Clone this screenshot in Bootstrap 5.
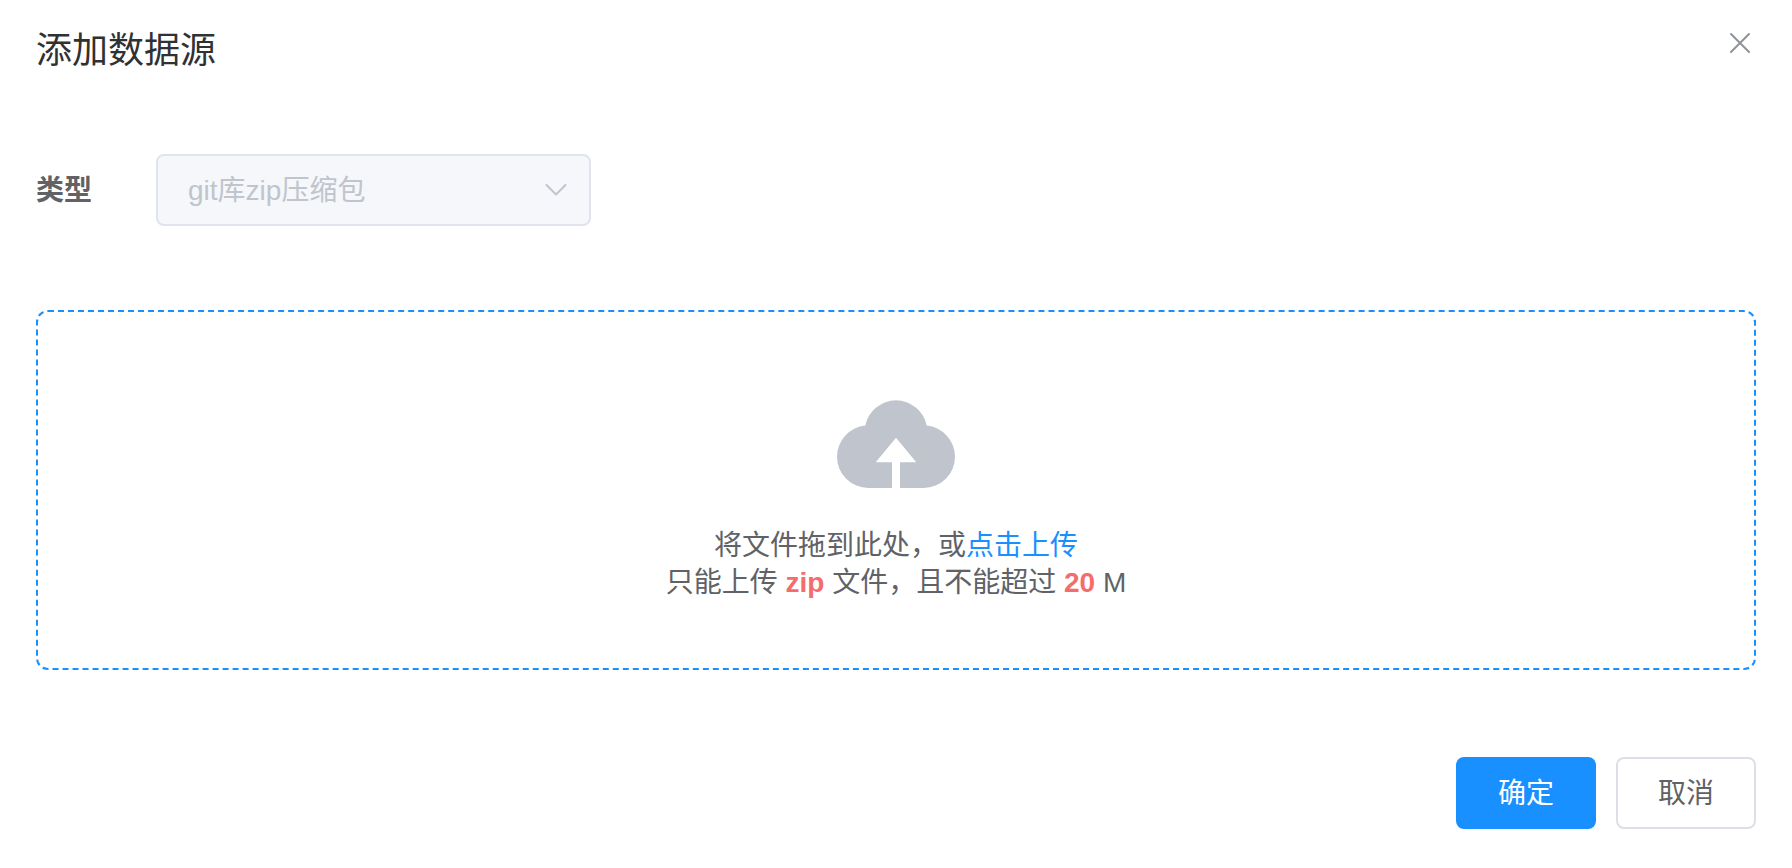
<!DOCTYPE html>
<html lang="zh-CN">
<head>
<meta charset="utf-8">
<meta name="viewport" content="width=device-width, initial-scale=1">
<title>添加数据源</title>
<link href="https://cdn.jsdelivr.net/npm/bootstrap@5.3.0/dist/css/bootstrap.min.css" rel="stylesheet">
<style>
  body {
    font-family: "Liberation Sans", "Noto Sans CJK SC", sans-serif;
    font-size: 28px;
    line-height: 37px;
    color: #606266;
    background: #fff;
  }
  .dialog-body { padding: 24px 36px; }
  .dialog-title { font-size: 36px; line-height: 54px; color: #303133; }
  .dialog-close { padding: 8px 5px; line-height: 0; color: #909399; border: 0; }
  .type-row { margin-top: 76px; gap: 64px; }
  .type-select {
    width: 435px;
    height: 72px;
    padding: 2px 60px 0 30px;
    font-size: 28px;
    border: 2px solid #dfe4ed;
    border-radius: 8px;
    background-size: 24px 14px;
    background-position: right 21px center;
    background-image: url("data:image/svg+xml,%3Csvg xmlns='http://www.w3.org/2000/svg' viewBox='0 0 24 14'%3E%3Cpath d='M2.5 2L12 11.5L21.5 2' fill='none' stroke='%23c0c4cc' stroke-width='2' stroke-linecap='round' stroke-linejoin='round'/%3E%3C/svg%3E");
  }
  .type-select:disabled { color: #c0c4cc; background-color: #f5f7fa; opacity: 1; }
  .drop-zone {
    height: 360px;
    margin-top: 84px;
    padding-top: 21px;
    border: 2px dashed #1890ff;
    border-radius: 12px;
  }
  .drop-hint { margin-top: 39px; }
  .drop-hint a { color: #1890ff; }
  .drop-hint strong { color: #f56c6c; }
  .dialog-actions { margin-top: 87px; gap: 20px; }
  .dialog-actions .btn {
    width: 140px;
    height: 72px;
    font-size: 28px;
    line-height: 36px;
    padding: 2px 0 0;
    border-width: 2px;
    border-radius: 8px;
  }
  .btn-confirm, .btn-confirm:hover { color: #fff; background: #1890ff; border-color: #1890ff; }
  .btn-cancel, .btn-cancel:hover { color: #606266; background: #fff; border-color: #dcdfe6; }
</style>
</head>
<body>
<main class="dialog-body">
  <header class="d-flex justify-content-between align-items-start">
    <h1 class="dialog-title fw-normal m-0">添加数据源</h1>
    <button type="button" class="dialog-close bg-transparent" aria-label="关闭">
      <svg width="22" height="22" viewBox="0 0 22 22" fill="none" stroke="currentColor" stroke-width="2" stroke-linecap="round"><path d="M2 2l18 18M20 2L2 20"/></svg>
    </button>
  </header>

  <div class="type-row d-flex align-items-center">
    <label class="fw-bold" for="source-type">类型</label>
    <select id="source-type" class="form-select type-select" disabled>
      <option selected>git库zip压缩包</option>
    </select>
  </div>

  <section class="drop-zone d-flex flex-column align-items-center justify-content-center text-center">
    <svg width="118" height="88" viewBox="0 0 118 88" aria-hidden="true">
      <path fill="#c0c4cc" d="M28.3 25.5A31.3 31.3 0 0 1 89.7 25.5A31.3 31.3 0 0 1 118 56.7A31.3 31.3 0 0 1 86.7 88H63V62.3H79.3L59 37.7L38.7 62.3H55V88H31.3A31.3 31.3 0 0 1 0 56.7A31.3 31.3 0 0 1 28.3 25.5Z"/>
    </svg>
    <div class="drop-hint">
      <div>将文件拖到此处，或<a href="#" class="text-decoration-none">点击上传</a></div>
      <div>只能上传 <strong>zip</strong> 文件，且不能超过 <strong>20</strong> M</div>
    </div>
  </section>

  <footer class="dialog-actions d-flex justify-content-end">
    <button type="button" class="btn btn-confirm">确定</button>
    <button type="button" class="btn btn-cancel">取消</button>
  </footer>
</main>
<script src="https://cdn.jsdelivr.net/npm/bootstrap@5.3.0/dist/js/bootstrap.bundle.min.js"></script>
</body>
</html>
